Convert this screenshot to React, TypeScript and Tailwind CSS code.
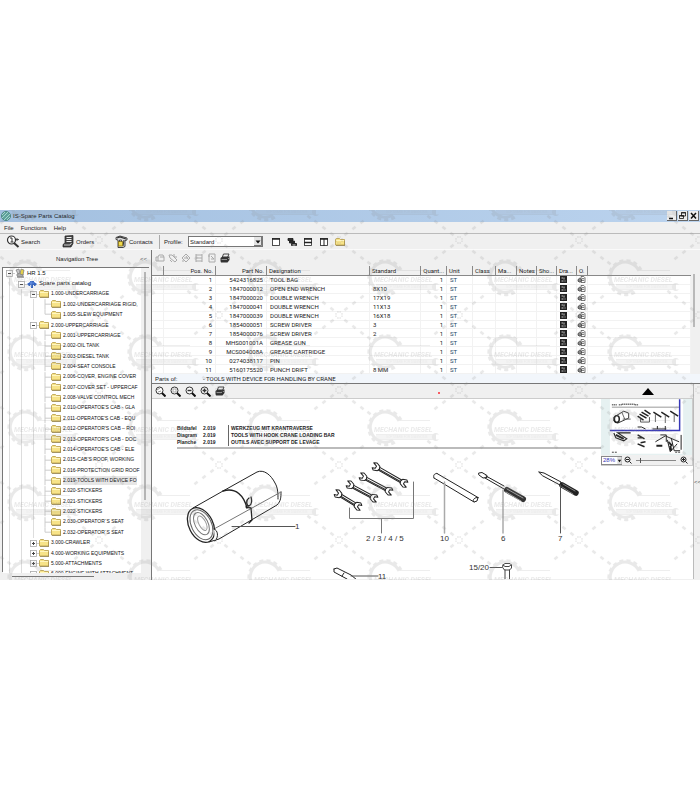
import { useState } from "react";
import type { ReactNode } from "react";

type IconProps = { className?: string };

type Node = {
  level: number;
  label: string;
  kind?: "crane" | "catalog";
  state?: "open" | "closed";
  last?: boolean;
};

const nodes: Node[] = [
  { level: 0, label: "HR 1.5", kind: "crane", state: "open" },
  { level: 1, label: "Spare parts catalog", kind: "catalog", state: "open" },
  { level: 2, label: "1.000-UNDERCARRIAGE", state: "open" },
  { level: 3, label: "1.002-UNDERCARRIAGE RIGID," },
  { level: 3, label: "1.005-SLEW EQUIPMENT", last: true },
  { level: 2, label: "2.000-UPPERCARRIAGE", state: "open" },
  { level: 3, label: "2.001-UPPERCARRIAGE" },
  { level: 3, label: "2.002-OIL TANK" },
  { level: 3, label: "2.003-DIESEL TANK" },
  { level: 3, label: "2.004-SEAT CONSOLE" },
  { level: 3, label: "2.006-COVER, ENGINE COVER" },
  { level: 3, label: "2.007-COVER SET - UPPERCAF" },
  { level: 3, label: "2.008-VALVE CONTROL MECH" },
  { level: 3, label: "2.010-OPERATOE'S CAB - GLA" },
  { level: 3, label: "2.011-OPERATOE'S CAB - EQU" },
  { level: 3, label: "2.012-OPERATOR'S CAB – ROI" },
  { level: 3, label: "2.013-OPERATOR'S CAB - DOC" },
  { level: 3, label: "2.014-OPERATOE'S CAB - ELE" },
  { level: 3, label: "2.015-CAB'S ROOF, WORKING" },
  { level: 3, label: "2.016-PROTECTION GRID ROOF" },
  { level: 3, label: "2.019-TOOLS WITH DEVICE FO" },
  { level: 3, label: "2.020-STICKERS" },
  { level: 3, label: "2.021-STICKERS" },
  { level: 3, label: "2.022-STICKERS" },
  { level: 3, label: "2.030-OPERATOR`S SEAT" },
  { level: 3, label: "2.032-OPERATOR`S SEAT", last: true },
  { level: 2, label: "3.000-CRAWLER", state: "closed" },
  { level: 2, label: "4.000-WORKING EQUIPMENTS", state: "closed" },
  { level: 2, label: "5.000-ATTACHMENTS", state: "closed" },
  { level: 2, label: "6.000-ENGINE WITH ATTACHMENT", state: "closed" },
];

const parts = [
  ["1", "5424316825", "TOOL BAG", ""],
  ["2", "1847000012", "OPEN END WRENCH", "8X10"],
  ["3", "1847000020", "DOUBLE WRENCH", "17X19"],
  ["4", "1847000041", "DOUBLE WRENCH", "11X13"],
  ["5", "1847000039", "DOUBLE WRENCH", "16X18"],
  ["6", "1854000051", "SCREW DRIVER", "3"],
  ["7", "1854000076", "SCREW DRIVER", "2"],
  ["8", "MHS001001A", "GREASE GUN", ""],
  ["9", "MCS004008A", "GREASE CARTRIDGE", ""],
  ["10", "0274038117", "PIN", ""],
  ["11", "5160175520", "PUNCH DRIFT", "8 MM"],
];

const columns = [
  { label: "", className: "w-[12px]" },
  { label: "Pos. No.", className: "w-[52px] text-right" },
  { label: "Part No.", className: "w-[51px] text-right" },
  { label: "Designation", className: "w-[103px]" },
  { label: "Standard", className: "w-[51px]" },
  { label: "Quant...", className: "w-[26px] text-right" },
  { label: "Unit", className: "w-[26px]" },
  { label: "Class", className: "w-[23px]" },
  { label: "Ma...", className: "w-[21px]" },
  { label: "Notes", className: "w-[20px]" },
  { label: "Sho...", className: "w-[20px]" },
  { label: "Dra...", className: "w-[20px]" },
  { label: "O.", className: "w-[11px]" },
];

const Folder = ({ className }: IconProps) => (
  <svg viewBox="0 0 10 8" className={className}>
    <path d="M.5 7V1.500L1.500.500h3l1 1h4V7z" fill="#f7e388" stroke="#b59a45" strokeWidth=".8" />
    <path d="M1 2.500h8" stroke="#fff6c0" />
    <path d="M1 7.500h9V3" stroke="#8a7740" strokeWidth=".7" fill="none" />
  </svg>
);

const Globe = () => (
  <svg viewBox="0 0 10 10" className="size-[10px]">
    <circle cx="5" cy="5" r="4.500" fill="#5fa39c" stroke="#4c8782" />
    <path d="M1 4l3-3M1 7l6-6M3 9l6-6M6 9l3-3" stroke="#b9e2da" strokeWidth=".8" />
  </svg>
);

const CraneIcon = () => (
  <svg viewBox="0 0 10 10" className="size-[10px]">
    <path d="M1 2l3-1 1 4-2 1zM2 6h6v2H2z" fill="#c9c9c9" stroke="#777" strokeWidth=".7" />
    <path d="M6 1l3 1-1 5-3-1z" fill="#e3cf4a" stroke="#777" strokeWidth=".7" />
    <path d="M2 9h7" stroke="#555" strokeWidth="1" />
  </svg>
);

const CatalogIcon = () => (
  <svg viewBox="0 0 10 8" className="h-2 w-[10px]">
    <path d="M0 4l3-2V1h4v1l3 2-2 2H7V5H6v3H4V5H3v1H2z" fill="#2f62c4" />
    <path d="M3 3h4M4 1v6" stroke="#7fa3ea" strokeWidth=".7" />
  </svg>
);

const SearchIcon = () => (
  <svg viewBox="0 0 14 13" className="h-[13px] w-[14px]" fill="none" stroke="#333">
    <circle cx="5.500" cy="5" r="4" fill="#fff" strokeWidth="1.200" />
    <path d="M8 8l4.500 4" strokeWidth="2" />
    <path d="M4 3h2v4M4.500 7h3" strokeWidth="1" />
    <path d="M11 3v3M9.500 4.500h3.500" strokeWidth=".8" />
  </svg>
);

const OrdersIcon = () => (
  <svg viewBox="0 0 12 13" className="h-[13px] w-3">
    <path d="M3 1l8-.500v8L9 12H1V9.500L3 8z" fill="#444" stroke="#222" strokeWidth=".7" />
    <path d="M4.500 2.500h5M4.500 4.500h5M4.500 6.500h5" stroke="#eee" strokeWidth="1" />
    <path d="M2 10h6l1.500-2" stroke="#ddd" strokeWidth=".9" fill="none" />
  </svg>
);

const ContactsIcon = () => (
  <svg viewBox="0 0 13 13" className="h-[13px] w-[13px]" fill="none" stroke="#333">
    <path d="M1 2.500l4-1.500 7 2v2l-2 .500v6l-2 1H3V5L1 4.500z" fill="#ddd" strokeWidth=".9" />
    <path d="M2 3l3-1 6 2" strokeWidth="1.300" />
    <path d="M9 5l-1 6" strokeWidth="1" />
    <rect x="3.500" y="6.500" width="4" height="4.500" fill="#f0d94c" stroke="#8a7413" strokeWidth=".8" />
    <path d="M4.500 6.500V5h2v1.500" strokeWidth=".8" />
  </svg>
);

const Printer = ({ className }: IconProps) => (
  <svg viewBox="0 0 10 10" className={className}>
    <path d="M3.500 1H9L7.500 4.500H2.200z" fill="#eee" stroke="#333" strokeWidth=".9" />
    <path d="M.5 5l2-1.500h7V7l-2 2.500H1L.500 8z" fill="#333" />
    <path d="M1.500 6.500h5.500M8 6l1-1" stroke="#aaa" strokeWidth=".8" />
  </svg>
);

const Magnifier = ({ children }: { children?: ReactNode }) => (
  <svg viewBox="0 0 11 11" className="size-[11px]" fill="none" stroke="#333">
    <circle cx="4.500" cy="4.500" r="3.500" fill="#fff" />
    <path d="M7 7l3.500 3.500" stroke="#111" strokeWidth="2" />
    {children}
  </svg>
);

const toolIcons = [
  <path d="M1 4h2l1-2h4l1 2v4H1zM3 4v4M5 4h4" />,
  <path d="M1 2h3l5 5-2 2-5-4zM6 1v3h3M2 7l2 2" />,
  <path d="M1 5l4-4 4 4-4 4zM3 5h4M5 3l2 3M1 8h2" />,
  <path d="M2 1v8M8 1v8M2 2h6M2 5h6M2 8h6" />,
  <path d="M2 1h6v8H2zM4 3l3 3M4 6h3M1 3h2" />,
];

const windowIcons = [
  { name: "Single window", art: null },
  { name: "Split horizontally", art: <path d="M1 5.500h8" strokeWidth="1.500" /> },
  { name: "Split vertically", art: <path d="M5 2v7" strokeWidth="1" /> },
];

const WindowIcon = ({ art }: { art: ReactNode }) => (
  <svg viewBox="0 0 10 10" className="size-[10px]" fill="none" stroke="#222">
    <rect x="1.500" y="1.500" width="7" height="7" fill="#fff" strokeWidth=".8" />
    <path d="M1 2h8" strokeWidth="1.500" />
    {art}
  </svg>
);

const CascadeIcon = () => (
  <svg viewBox="0 0 10 10" className="size-[10px]" stroke="#111" strokeWidth=".8">
    <path d="M1 1.500h5v2H1zM2.500 4h5v2h-5zM4.500 6.500h5v2h-5z" fill="#333" />
    <path d="M5.500 8h3" stroke="#fff" />
  </svg>
);

const DrawingMark = () => (
  <svg viewBox="0 0 7 7" className="size-[7px]">
    <rect width="7" height="7" fill="#222" />
    <path d="M1.500 2h1.500M4 1.500v2M1.500 5h2M5 4.500v1" stroke="#ddd" strokeWidth=".9" />
  </svg>
);

const OrderMark = () => (
  <svg viewBox="0 0 9 8" className="h-[7px] w-[9px]" fill="none" stroke="#333" strokeWidth=".8">
    <path d="M4 .5h3l1.500 1.500v5.500H4z" fill="#fff" />
    <path d="M5 3h2.500M5 5h2.500" />
    <path d="M.5 4l2-1.500 2 1.500v2l-2 1-2-1z" fill="#888" />
  </svg>
);

const dashes = [
  [7, 6],
  [15, 12],
  [23, 18],
  [30, 23],
];

const Star = ({ x, y }: { x: number; y: number }) => (
  <g transform={`translate(${x} ${y})`}>
    <path d="M-2 -3h4M-2 3h4M-3 -2v4M3 -2v4" stroke="currentColor" strokeWidth="1.500" strokeDasharray="1.800 .600" />
    {[
      [1, 1],
      [1, -1],
      [-1, 1],
      [-1, -1],
    ].map(([sx, sy]) => (
      <g key={`${sx}${sy}`} transform={`scale(${sx} ${sy})`}>
        {dashes.slice(0, sx * sy > 0 ? 4 : 3).map(([dx, dy]) => (
          <rect
            key={dx}
            x="-2"
            y="-1.300"
            width="4"
            height="2.600"
            fill="currentColor"
            transform={`translate(${dx} ${dy}) rotate(38)`}
          />
        ))}
      </g>
    ))}
  </g>
);

const Watermark = () => (
  <svg className="pointer-events-none absolute inset-0 h-full w-full text-[#8c8c8c] opacity-18" aria-hidden="true">
    <defs>
      <pattern id="brand" x="-31" y="20" width="120" height="75" patternUnits="userSpaceOnUse">
        <Star x={10} y={10} />
        <Star x={130} y={10} />
        <Star x={10} y={85} />
        <Star x={130} y={85} />
        <g fill="none" stroke="currentColor">
          <path d="M70 41A15 15 0 1 0 64 60" strokeWidth="3" />
          <path d="M72 40A17 17 0 1 0 66 62" strokeWidth="3" strokeDasharray="4 3" />
          <path d="M71 40.500h30" strokeWidth=".8" />
          <path d="M47 54.500h57M47 59.500h57" strokeWidth=".8" />
        </g>
        <path d="M47 55h57v4H47z" fill="currentColor" opacity=".5" />
        <path d="M110 54.500a4 4 0 1 0 0 5h-3v-5z" fill="currentColor" />
        <text
          x="45"
          y="52"
          fontSize="7"
          fontWeight="bold"
          fontStyle="italic"
          fontFamily="Roboto, sans-serif"
          fill="currentColor"
        >
          MECHANIC DIESEL
        </text>
        <text x="57" y="58" fontSize="3" fontFamily="'Liberation Sans', sans-serif" fill="currentColor">
          SOFTWARE FOR DIAGNOSIS
        </text>
      </pattern>
    </defs>
    <rect width="100%" height="100%" fill="url(#brand)" />
  </svg>
);

const TitleBar = () => (
  <header className="flex h-3 items-center bg-linear-to-r from-[#a3c0e0] to-[#bbd3ee] pl-px">
    <Globe />
    <h1 className="ml-[2px] flex-1">IS-Spare Parts Catalog</h1>
    {[
      { name: "Minimize", art: <path d="M2 7.500h4" strokeWidth="1.500" /> },
      { name: "Restore", art: <path d="M3.500 1.500h4v3.500h-4zM1.500 4.500h4v3h-4zM3 2h5M1 5h5" strokeWidth=".8" /> },
      { name: "Close", art: <path d="M2 2l5 5.500M7 2L2 7.500" strokeWidth="1.500" /> },
    ].map(({ name, art }) => (
      <button
        key={name}
        aria-label={name}
        className="mr-px h-[10px] w-[10px] border-r border-b border-[#666] bg-[#ededed]"
      >
        <svg viewBox="0 0 9 9" className="size-[9px]" fill="none" stroke="#111">
          {art}
        </svg>
      </button>
    ))}
  </header>
);

const Toolbar = () => (
  <div className="flex h-4 items-center border-b border-[#fafafa] pl-[6px]">
    <button className="flex w-14 items-center gap-px">
      <SearchIcon />
      Search
    </button>
    <button className="flex w-[53px] items-center gap-[2px]">
      <OrdersIcon />
      Orders
    </button>
    <button className="flex w-11 items-center gap-px">
      <ContactsIcon />
      Contacts
    </button>
    <label htmlFor="profile" className="flex h-[14px] w-[29px] items-center border-l border-[#aaa] pl-1">
      Profile:
    </label>
    <div className="relative h-[11px] w-[75px]">
      <select
        id="profile"
        className="block h-full w-full appearance-none border border-[#777] bg-white pl-px text-[6px] leading-[8px]"
      >
        <option>Standard</option>
      </select>
      <svg viewBox="0 0 8 9" className="pointer-events-none absolute top-px right-px h-[9px] w-2">
        <path d="M0 0h8v9H0z" fill="#e4e4e4" />
        <path d="M7.500 0v8.500H0" stroke="#777" fill="none" />
        <path d="M1.500 3.500h5L4 6.500z" fill="#111" />
      </svg>
    </div>
    <div className="ml-2 flex items-center gap-[6px]">
      <button aria-label={windowIcons[0].name}>
        <WindowIcon art={windowIcons[0].art} />
      </button>
      <button aria-label="Cascade">
        <CascadeIcon />
      </button>
      <button aria-label={windowIcons[1].name}>
        <WindowIcon art={windowIcons[1].art} />
      </button>
      <button aria-label={windowIcons[2].name}>
        <WindowIcon art={windowIcons[2].art} />
      </button>
      <button aria-label="Open folder">
        <Folder className="h-2 w-[10px]" />
      </button>
    </div>
  </div>
);

const Expander = ({ state }: { state: "open" | "closed" }) => (
  <svg viewBox="0 0 12 10" className="h-[10px] w-3" fill="none" stroke="#aaa">
    <path d="M9 5.500h3" stroke="#ccc" />
    <rect x="3.500" y="2.500" width="6" height="6" fill="#fff" strokeWidth=".8" />
    <path d={state === "open" ? "M5 5.500h3" : "M5 5.500h3M6.500 4v3"} stroke="#444" />
  </svg>
);

const NavigationTree = () => {
  const [selected, setSelected] = useState(20);
  return (
    <aside className="flex w-[151px] shrink-0 flex-col pl-[2px]">
      <div className="flex h-[17px] items-center justify-between pr-1 pl-[54px]">
        <h2>Navigation Tree</h2>
        <button aria-label="Collapse tree" className="text-[#555]">
          &lt;&lt;
        </button>
      </div>
      <div className="mr-[2px] flex h-[305px] border-t border-l border-[#777]">
        <ul className="grid h-[311px] min-w-0 flex-1 auto-rows-fr overflow-hidden bg-white text-[#111] [clip-path:inset(0_0_6px_0)]">
          {nodes.map((node, index) => (
            <li key={node.label} className={node.level > 1 ? "flex min-h-0 text-[5px]" : "flex min-h-0"}>
              {Array.from({ length: node.level }, (_, depth) => (
                <span key={depth} className="flex w-3 shrink-0 justify-center">
                  <span className="w-px bg-[#ddd]" />
                </span>
              ))}
              {node.state ? (
                <span className="flex shrink-0 items-center">
                  <Expander state={node.state} />
                </span>
              ) : (
                <svg viewBox="0 0 12 10" className="h-full w-3 shrink-0" fill="none" stroke="#ccc">
                  <path d={node.last ? "M6 0v5h6" : "M6 0v10M6 5h6"} />
                </svg>
              )}
              <button onClick={() => setSelected(index)} className="flex items-center gap-[2px] whitespace-nowrap">
                {node.kind === "crane" && <CraneIcon />}
                {node.kind === "catalog" && <CatalogIcon />}
                {!node.kind && <Folder className="h-2 w-[10px]" />}
                <span className={selected === index ? "bg-[#e6e6e6] leading-[9px]" : "leading-[9px]"}>{node.label}</span>
              </button>
            </li>
          ))}
        </ul>
        <div className="flex w-2 shrink-0 justify-center pt-1">
          <div className="h-[228px] w-[2px] bg-[#b5b5b5]" />
        </div>
      </div>
      <div className="flex h-2 items-center">
        <div className="ml-[10px] h-px w-[82px] bg-[#777]" />
      </div>
    </aside>
  );
};

const PartsTable = () => (
  <div className="flex h-[108px] overflow-hidden">
    <table className="h-[108px] w-full table-fixed border-separate border-spacing-0 bg-white text-left font-[Roboto,sans-serif]">
      <thead>
        <tr className="h-[10px] bg-[#f0f0f0] leading-[8px]">
          {columns.map((column, i) => (
            <th
              key={i}
              className={`overflow-hidden border-r border-b border-[#888] px-[2px] py-0 font-normal whitespace-nowrap ${column.className}`}
            >
              {column.label}
            </th>
          ))}
          <th className="border-b border-[#888] p-0" />
        </tr>
      </thead>
      <tbody className="[&_td]:overflow-hidden [&_td]:border-r [&_td]:border-b [&_td]:border-[#f2f2f2] [&_td]:px-[3px] [&_td]:py-0 [&_td]:whitespace-nowrap">
        {parts.map(([pos, part, designation, standard]) => (
          <tr key={pos} className="leading-[7px]">
            <td />
            <td className="text-right">{pos}</td>
            <td className="text-right">{part}</td>
            <td>{designation}</td>
            <td>{standard}</td>
            <td className="text-right">1</td>
            <td className="text-[#246]">ST</td>
            <td />
            <td />
            <td />
            <td />
            <td>
              <DrawingMark />
            </td>
            <td className="px-0!">
              <OrderMark />
            </td>
            <td />
          </tr>
        ))}
      </tbody>
    </table>
    <div className="w-[9px] shrink-0 pt-2 pl-[2px]">
      <div className="h-[53px] w-[2px] bg-[#b9b9b9]" />
    </div>
  </div>
);

// a spanner lying along the x axis, turned onto its two ends
const Wrench = ({ from, to }: { from: [number, number]; to: [number, number] }) => {
  const dx = to[0] - from[0];
  const dy = to[1] - from[1];
  const length = Math.hypot(dx, dy);
  const angle = (Math.atan2(dy, dx) * 180) / Math.PI;
  return (
    <g transform={`translate(${from[0]} ${from[1]}) rotate(${angle})`} fill="#fff" stroke="#222">
      <path d={`M3 -1.500H${length - 3}V1.500H3z`} />
      <path d={`M4 .5H${length - 4}`} />
      <path d="M-4 -2.500l3-1.500 4 1.500 1 2.500-1 2.500-4 1.500-2-1.500 3-1v-2.500z" />
      <path d={`M${length + 4} 2.500l-3 1.500-4-1.500-1-2.500 1-2.500 4-1.500 2 1.500-3 1v2.500z`} />
    </g>
  );
};

const Drawing = () => (
  <svg
    viewBox="152 450 541 130"
    className="block h-[130px] w-[541px]"
    fill="none"
    stroke="#222"
    strokeLinecap="round"
    strokeLinejoin="round"
  >
    {/* tool bag */}
    <path d="M193 509L223 492L257 473C264 470 271 476 275 484C278 489 278 495 278 500" />
    <path d="M209 543L219 540L277 506C281 502 281 498 281 493" />
    <path d="M214 530L281 493" stroke="#777" />
    <path d="M223 492C236 488 244 497 247 509" strokeWidth="1.500" />
    <path d="M249 499c-3 2-3 7 0 8 3-1 3-6 2-9M246 508l5 1 1 12-3 3" strokeWidth="1.300" />
    <g transform="rotate(-27 201 526)">
      <ellipse cx="201" cy="526" rx="12" ry="18.500" fill="#fff" strokeWidth="1.300" />
      <ellipse cx="201.500" cy="526" rx="10" ry="16" stroke="#666" />
      <ellipse cx="202" cy="525" rx="6.500" ry="12" stroke="#777" />
      <ellipse cx="203" cy="525" rx="3.500" ry="8" stroke="#999" />
    </g>
    <path d="M214 530c4 1 5 8 1 12" fill="#fff" />
    <path d="M232 527.500H295" stroke="#555" />

    <Wrench from={[338, 495]} to={[358, 507]} />
    <Wrench from={[350, 486]} to={[374, 499]} />
    <Wrench from={[363, 478]} to={[389, 492]} />
    <Wrench from={[376, 468]} to={[404, 484]} />
    <path d="M349.500 509V519.500H413.500V483M381.500 520V534" stroke="#777" />

    {/* pin */}
    <path d="M437 474.500L478 498.500M434 479L474 503M437 474.500c-3 0-4 2-3 4.500M478 498.500l-1 3.500-3 1c-2-1 0-5 4-4.500" />
    <path d="M444.500 483V534" stroke="#aaa" strokeWidth="1.500" />

    {/* flat screwdriver */}
    <path d="M479 474l3-.500 5 3v2l-4 .500-4-3zM486 477l18 10M485 479l19 11" fill="#fff" />
    <path d="M507 491L523 500" stroke="#333" strokeWidth="6" />
    <path d="M507 490L523 499M506 493L521 502" stroke="#bbb" strokeWidth=".8" />
    <path d="M503 491V534" stroke="#aaa" strokeWidth="1.500" />

    {/* cross screwdriver */}
    <path d="M539 473l5 1 17 9-1 3-17-9z" fill="#fff" />
    <path d="M562 486L576 494" stroke="#222" strokeWidth="5.500" />
    <path d="M563 485L575 492M562 488L573 495" stroke="#999" strokeWidth=".8" />
    <path d="M560.500 486V534" stroke="#555" />

    <path d="M334 570l3-1 14 7 6 5M334 570l0 3 13 7M344 574l-2 3" />
    <path d="M351 577H378M490 568.500H502" stroke="#555" />
    <path d="M503 566l2-1.500h5l1.500 1.500v3l-2 2h-5l-1.500-2zM503 566l2 1.500h4l2-1.500M505 571v10M509.500 571v10" stroke="#444" />

    <g fontFamily="'Liberation Sans', Arial, sans-serif" fontSize="8" fill="#333" stroke="none">
      <text x="295" y="530">1</text>
      <text x="366" y="542">2 / 3 / 4 / 5</text>
      <text x="440" y="542">10</text>
      <text x="501" y="542">6</text>
      <text x="558" y="542">7</text>
      <text x="378" y="580">11</text>
      <text x="469" y="571">15/20</text>
    </g>
  </svg>
);

const Overview = () => (
  <div className="absolute top-0 right-0 flex w-[92px] flex-col border-r border-b border-[#ccc] bg-[#f0f0f0]">
    <svg viewBox="0 0 92 56" className="h-14 w-full bg-[#e6f1f1]" fill="none" stroke="#222">
      <rect x="9" width="74" height="55" fill="#fff" stroke="none" />
      <path d="M11 5.500h5M18 5.500h3M21 5h13M34 5.500h4" stroke="#777" strokeWidth="1.500" strokeDasharray="1.500 .5" />
      <path d="M11 8h68" stroke="#bbb" strokeWidth="1.500" />
      <path d="M13 18l10-6 5 2v5l-11 5-4-2z" stroke="#333" />
      <ellipse cx="16" cy="20" rx="2.500" ry="3.500" strokeWidth="1.500" />
      <path d="M21 13l3 7M22 20h8" stroke="#666" />
      <path d="M37 17l6 4M39 15l7 4M41 13l7 4M44 11l6 4" strokeWidth="1.500" />
      <path d="M40 20v3h9v-5" stroke="#555" />
      <path d="M53 13l8 5M61 13l8 5M70 12l8 5" strokeWidth="1.500" />
      <path d="M55 15v8M65 16v8M74 15v8" stroke="#666" />
      <path d="M37 28h4l4 2M52 30h14M57 27v3M65 27v4" strokeWidth="1" />
      <path d="M13 34l2 5 8 3 3-2-9-6h13" strokeWidth="1.200" />
      <path d="M15 36l8 4" strokeWidth="2" />
      <path d="M37 36l7 4M37 39h5M37 45l7 3M40 44l5-1" strokeWidth="1.500" />
      <path d="M55 43l10-6 14 6M60 36h6v7M67 41l3 12 7-8M71 39l3 13h6M81 36v15" strokeWidth="1" />
      <path d="M56 47h6M68 43l4 4M70 47l1 5" strokeWidth="2" />
      <path d="M11 53.500h6M75 53.500h6" stroke="#444" strokeDasharray="2 1" />
      <path d="M79.500 0V31.500H9" stroke="#3838b8" strokeWidth="1.500" />
    </svg>
    <div className="flex h-[10px] items-center">
      <div className="relative h-[9px] w-[21px]">
        <select
          aria-label="Zoom"
          className="block h-full w-full appearance-none border border-[#888] bg-white pl-px text-[6px] leading-[7px] text-[#3838b8]"
        >
          <option>28%</option>
        </select>
        <svg viewBox="0 0 5 8" className="pointer-events-none absolute top-px right-0 h-[7px] w-[5px]">
          <path d="M0 0h5v8H0z" fill="#ddd" />
          <path d="M.5 3h4L2.500 6z" fill="#111" />
        </svg>
      </div>
      <button aria-label="Zoom out" className="ml-[2px]">
        <svg viewBox="0 0 8 8" className="size-2" fill="none" stroke="#222">
          <path d="M1 3.500a2.500 2.500 0 1 0 5 0 2.500 2.500 0 1 0-5 0M2 3.500h3M5.500 5.500l2 2" />
        </svg>
      </button>
      <input
        type="range"
        aria-label="Zoom level"
        defaultValue={10}
        className="mx-1 h-2 min-w-0 flex-1 appearance-none bg-transparent [&::-webkit-slider-runnable-track]:h-px [&::-webkit-slider-runnable-track]:bg-[#888] [&::-webkit-slider-thumb]:-mt-[2px] [&::-webkit-slider-thumb]:h-[5px] [&::-webkit-slider-thumb]:w-px [&::-webkit-slider-thumb]:appearance-none [&::-webkit-slider-thumb]:bg-[#555]"
      />
      <button aria-label="Zoom in" className="mr-1">
        <svg viewBox="0 0 8 8" className="size-2" fill="none" stroke="#222">
          <path d="M1 3.500a2.500 2.500 0 1 0 5 0 2.500 2.500 0 1 0-5 0M2 3.500h3M3.500 2v3M5.500 5.500l2 2" />
        </svg>
      </button>
    </div>
  </div>
);

const DiagramPanel = () => (
  <section className="flex border-t border-[#777]">
    <div className="min-w-0 flex-1">
      <div className="flex h-[15px] items-center gap-[2px] border-b border-[#ccc] pl-[3px]">
        <button aria-label="Zoom area">
          <Magnifier>
            <path d="M2 4l3-2M3 6l3-1" stroke="#999" />
          </Magnifier>
        </button>
        <button aria-label="Fit to window" className="ml-[2px]">
          <Magnifier>
            <path d="M3 3h3v3H3z" stroke="#aaa" />
          </Magnifier>
        </button>
        <button aria-label="Zoom out" className="ml-[2px]">
          <Magnifier>
            <path d="M2.500 4.500h4" strokeWidth="1.500" />
          </Magnifier>
        </button>
        <button aria-label="Zoom in" className="ml-[2px]">
          <Magnifier>
            <path d="M2.500 4.500h4M4.500 2.500v4" strokeWidth="1.500" />
          </Magnifier>
        </button>
        <button aria-label="Print diagram" className="ml-[2px]">
          <Printer className="size-[10px]" />
        </button>
        <span className="mt-1 ml-auto size-[2px] rounded-full bg-red-500" />
        <button aria-label="Collapse diagram" className="mr-[39px] ml-[200px]">
          <svg viewBox="0 0 12 7" className="h-[7px] w-3">
            <path d="M6 0l6 7H0z" fill="#000" />
          </svg>
        </button>
      </div>
      <div className="relative overflow-hidden bg-white">
        <div className="flex h-[50px] items-end pl-[25px] text-[5px] leading-[7px] font-bold">
          <div className="flex flex-1 border-b-2 border-[#bbb] pb-px">
            <dl className="grid w-[52px] grid-cols-[26px_26px] border-r border-[#666]">
              <dt>Bildtafel</dt>
              <dd>2.019</dd>
              <dt>Diagram</dt>
              <dd>2.019</dd>
              <dt>Planche</dt>
              <dd>2.019</dd>
            </dl>
            <div className="pl-[2px]">
              <p>WERKZEUG MIT KRANTRAVERSE</p>
              <p>TOOLS WITH HOOK CRANE LOADING BAR</p>
              <p>OUTILS AVEC SUPPORT DE LEVAGE</p>
            </div>
          </div>
        </div>
        <Drawing />
        <Overview />
      </div>
    </div>
    <button aria-label="Show side panel" className="w-[7px] shrink-0 border-l border-[#bbb] text-[#555]">
      &lt;&lt;
    </button>
  </section>
);

export default function App() {
  return (
    <main className="min-h-screen bg-white pt-[210px] font-['Liberation_Sans',Arial,sans-serif] text-[6px] leading-[8px] text-[#222]">
      <div className="relative overflow-hidden bg-[#f0f0f0]">
        <TitleBar />
        <nav className="flex h-3 items-center gap-[7px] border-b border-[#bbb] pl-1">
          <button>File</button>
          <button>Functions</button>
          <button>Help</button>
        </nav>
        <Toolbar />
        <div className="flex">
          <NavigationTree />
          <div className="min-w-0 flex-1 border-l border-[#777]">
            <div className="flex h-4 items-center gap-[3px] pl-[3px]">
              {toolIcons.map((art, i) => (
                <button key={i} disabled aria-label={`Tool ${i + 1}`}>
                  <svg viewBox="0 0 10 10" className="size-[10px]" fill="none" stroke="#aaa">
                    {art}
                  </svg>
                </button>
              ))}
              <button aria-label="Print">
                <Printer className="size-[10px]" />
              </button>
            </div>
            <PartsTable />
            <div className="flex h-[9px] items-center bg-[#f2f6fb] pl-[3px]">
              <span className="w-12">Parts of:</span>
              <span className="font-[Roboto,sans-serif]">- TOOLS WITH DEVICE FOR HANDLING BY CRANE</span>
            </div>
            <DiagramPanel />
          </div>
        </div>
        <Watermark />
      </div>
    </main>
  );
}
